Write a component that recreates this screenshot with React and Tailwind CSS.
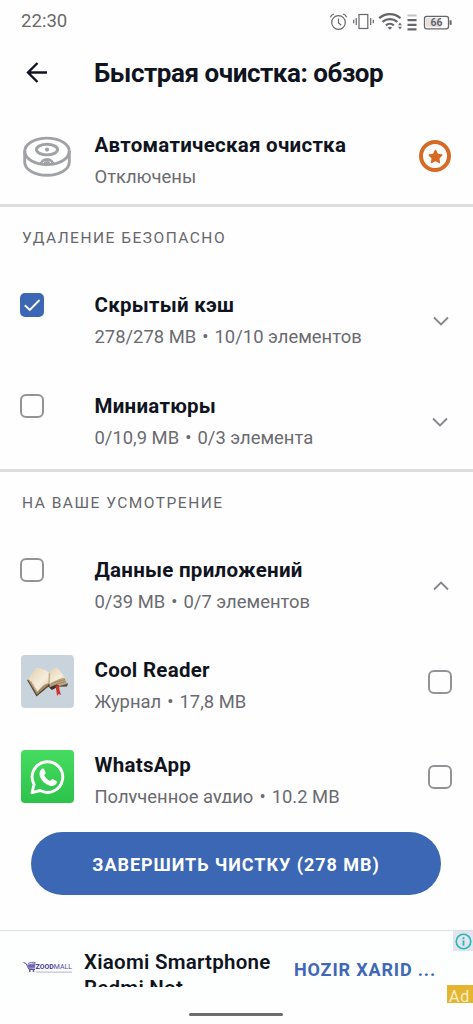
import { useState } from 'react'
import { FaStar } from 'react-icons/fa'

const INITIAL = { cache: true, thumbs: false, data: false, reader: false, whatsapp: false }

function Checkbox({ checked, onChange }) {
  return (
    <button
      onClick={onChange}
      className={
        checked
          ? 'flex h-6 w-6 shrink-0 items-center justify-center rounded-[5px] bg-[#3c67b4]'
          : 'h-6 w-6 shrink-0 rounded-[6px] border-2 border-[#929397]'
      }
    >
      {checked && (
        <svg viewBox="0 0 24 24" className="h-6 w-6" fill="none" stroke="#fff" strokeWidth="1.9">
          <path d="M4.8 12.2 9.8 17 19.5 7" />
        </svg>
      )}
    </button>
  )
}

function Chevron({ up }) {
  return (
    <svg viewBox="0 0 16 10" className="h-[10px] w-4 shrink-0" fill="none" stroke="#85868b" strokeWidth="1.8">
      <path d={up ? 'M1 8.5 8 1.5 15 8.5' : 'M1 1.5 8 8.5 15 1.5'} />
    </svg>
  )
}

function RowText({ title, info, extra }) {
  return (
    <div className="min-w-0 flex-1 whitespace-nowrap">
      <h3 className="text-[20.5px] leading-8 font-bold tracking-[0.27px] text-[#101420]">{title}</h3>
      <p className="text-[18.4px] leading-8 text-[#6a6b70]">
        {info}
        {extra && <> <span className="mx-[1.5px]">•</span> {extra}</>}
      </p>
    </div>
  )
}

function GroupRow({ title, info, extra, checked, onChange, up, chevronClass }) {
  return (
    <div className="flex items-start pl-[19.5px]">
      <div className="w-[75px] pt-1">
        <Checkbox checked={checked} onChange={onChange} />
      </div>
      <RowText title={title} info={info} extra={extra} />
      <div className={chevronClass}>
        <Chevron up={up} />
      </div>
    </div>
  )
}

function AppRow({ icon, title, info, extra, checked, onChange }) {
  return (
    <div className="flex items-start pr-[21px] pl-[21px]">
      <div className="w-[73.5px] pt-[1px]">{icon}</div>
      <RowText title={title} info={info} extra={extra} />
      <div className="pt-4">
        <Checkbox checked={checked} onChange={onChange} />
      </div>
    </div>
  )
}

function RobotIcon() {
  return (
    <svg viewBox="0 0 48 42" className="h-[42px] w-12" fill="none" stroke="#a0a2a6" strokeWidth="2.9">
      <ellipse cx="24" cy="15.3" rx="22.3" ry="13.2" />
      <path d="M1.7 15v11.3c0 7.2 10 13 22.3 13s22.3-5.8 22.3-13V15" />
      <ellipse cx="24" cy="13.6" rx="10.6" ry="5.3" />
      <path d="M18.2 28.2c0-2.8 2.6-4.7 5.8-4.7s5.8 1.9 5.8 4.7" />
      <circle cx="24" cy="13.6" r="2.1" fill="#a0a2a6" stroke="none" />
      <ellipse cx="24" cy="26.5" rx="3" ry="1.6" fill="#a0a2a6" stroke="none" />
    </svg>
  )
}

function BookIcon() {
  return (
    <svg viewBox="0 0 53 53" className="h-[53px] w-[53px] rounded-[4px] bg-[#c9d3dc]">
      <defs>
        <linearGradient id="page" x1="0" y1="0" x2="1" y2="1">
          <stop offset="0" stopColor="#e0cfaa" />
          <stop offset="0.6" stopColor="#f6eddc" />
          <stop offset="1" stopColor="#dcc8a0" />
        </linearGradient>
      </defs>
      <path d="M6 25 15.5 41.5 27 32 46 31.5 47 28.5 28 23z" fill="#574536" />
      <path d="M6.5 24 16 39.5 27.5 29.5 24 22z" fill="#b59c78" />
      <path d="M28 24 43.5 22.5 46 29 29 33.5z" fill="#bba681" />
      <path d="M7 23.5C11 20 12.5 15 16 12.5c3 1.5 8 1 12 5.5l.5 11c-4-2-8 3-12.5 8.5z" fill="url(#page)" />
      <path d="M28 18c2-4 5-4 8-5.5L44.5 23c-5-.5-9 2-16 6z" fill="url(#page)" />
      <path d="m8 25 8 13.500L27.500 30M9.500 26l7 11 10-8M30 31l14.500-4.500M30 28.500 44 24.500" fill="none" stroke="#8b7354" strokeWidth=".6" />
      <path d="M28.300 18 28 29" stroke="#b79b6c" strokeWidth="1" />
      <path d="M28 32.500 36 29.500 38 31 31 35z" fill="#3f302b" />
      <path d="m34.500 31 3.500-1 .5 5 1.500 5-2.500-1-1.500 2-.5-4.500z" fill="#cf3230" />
    </svg>
  )
}

function WhatsAppIcon() {
  return (
    <div className="flex h-[53px] w-[53px] items-center justify-center rounded-[4px] bg-gradient-to-b from-[#45dc61] to-[#2cc34a]">
      <svg viewBox="0 0 36 36" className="h-9 w-9">
        <path
          d="M4.100 25.500A15.300 15.300 0 1 1 10.200 31.500L2 33.700z"
          fill="none"
          stroke="#fff"
          strokeWidth="2.900"
          strokeLinejoin="round"
        />
        <path
          d="M11.500 10.200c.6-.7 1.900-.9 2.500-.2.500.7 1.200 2.500 1.600 3.700.3.900-1 1.900-1.500 2.500 1.300 2.600 3.300 4.500 6.100 5.700.8-.7 1.500-2.200 2.300-1.900l3.900 1.900c.8.400.4 2-.1 2.900-1.200 1.900-4 2.600-6.300 1.900-5-1.600-8.300-5-10-9-.9-2.700-.5-5.600 1.500-7.500z"
          fill="#fff"
        />
      </svg>
    </div>
  )
}

function StatusIcons() {
  return (
    <svg viewBox="0 0 126 20" className="mb-[3px] h-5 w-[126px]" fill="none" stroke="#66676a" strokeWidth="1.2">
      {/* alarm */}
      <circle cx="9.5" cy="11.5" r="6.8" />
      <path d="M9.5 7.5v4.3l2.7 2.5M1.3 6.2C2 4.7 3.3 3.5 5 3M17.7 6.2C17 4.700 15.700 3.500 14 3" />
      {/* vibrate */}
      <rect x="30" y="3.5" width="8.8" height="14" />
      <path d="M27.2 7v7M24.7 8.8v3.5M41.7 7v7M44.3 8.8v3.5" />
      {/* wifi */}
      <path d="M51 7.2c6-5.500 15.300-5.500 21.300 0M54.300 10.900c4.200-3.700 10.600-3.700 14.800 0M57.700 14.300c2.300-2 5.600-2 7.900 0" transform="translate(-.8 0)" strokeWidth="2.3" />
      <path d="m60.900 18.800-2.200-2.400c1.300-1 3.100-1 4.400 0z" fill="#66676a" stroke="none" />
      <path d="m71 11.500 1.900 2.700h-3.800zM71 18.500l1.900-2.700h-3.800z" fill="#66676a" stroke="none" />
      {/* signal */}
      <path d="M78.500 4.500h9" stroke="#c0c1c2" strokeWidth="2" />
      <path d="M78.500 9.200h9M78.500 13.800h9M78.500 18.300h9" strokeWidth="2.2" />
      {/* battery */}
      <rect x="95.500" y="5.300" width="24" height="12.500" rx="2.2" strokeWidth="1.3" />
      <rect x="97" y="6.800" width="15" height="9.500" fill="#e2e2e3" stroke="none" />
      <path d="M121.600 9.300v4.500" strokeWidth="2" />
      <text x="107.500" y="15.400" textAnchor="middle" className="font-semibold" fontSize="10.5" fill="#5d5e61" stroke="none">
        66
      </text>
    </svg>
  )
}

function ZoodLogo() {
  return (
    <svg viewBox="0 0 50 16" className="h-4 w-[50px]">
      <path d="M.5 3.500 3 4.500 6 10.500h6" fill="none" stroke="#5d51a8" strokeWidth="1" />
      <path d="M4 5.500 12.500 4 12 9.500 6 10z" fill="#8379bd" />
      <path d="M5 4.500c2-1 5-1.500 7.500-1M5.500 7h6.500" fill="none" stroke="#5d51a8" strokeWidth=".9" />
      <circle cx="6.800" cy="12" r="1" fill="#5d51a8" />
      <circle cx="10.500" cy="12" r="1" fill="#5d51a8" />
      <text x="12.500" y="10.300" fontSize="7.6" fill="#54479f" textLength="36.500" lengthAdjust="spacingAndGlyphs">
        <tspan className="font-extrabold">ZOOD</tspan>
        <tspan>MALL</tspan>
      </text>
      <path d="M13 13.200h36" stroke="#c3bfde" strokeWidth="1.200" />
    </svg>
  )
}

function App() {
  const [selected, setSelected] = useState(INITIAL)

  const toggle = (key) => setSelected(prev => ({ ...prev, [key]: !prev[key] }))

  return (
    <div className="flex h-[1024px] w-[473px] flex-col overflow-hidden bg-[#fefefe] font-[Roboto,sans-serif]">
      {/* Status bar */}
      <div className="flex h-[42px] shrink-0 items-center justify-between pt-[2px] pr-[18px] pl-[21px]">
        <span className="text-[18.6px] text-[#6b6b6b]">22:30</span>
        <StatusIcons />
      </div>

      {/* Header */}
      <header className="flex h-[62px] shrink-0 items-center pl-[26px]">
        <svg viewBox="0 0 22 22" className="h-[22px] w-[22px]" fill="none" stroke="#101420" strokeWidth="2.4">
          <path d="M21 10.500H2.500M11.500 1 2 10.500l9.500 9.500" />
        </svg>
        <h1 className="pl-[46px] text-[26px] font-bold tracking-[-0.46px] whitespace-nowrap text-[#101420]">
          Быстрая очистка: обзор
        </h1>
      </header>

      {/* Auto clean */}
      <div className="flex h-[103px] shrink-0 items-start border-b-[3px] border-[#dddddd] pt-[25px] pr-[22px] pl-[23px]">
        <div className="w-[71.5px] pt-[7px]">
          <RobotIcon />
        </div>
        <RowText title="Автоматическая очистка" info="Отключены" />
        <div className="mt-[11px] flex h-8 w-8 items-center justify-center rounded-full border-4 border-[#d66b25]">
          <FaStar className="h-[15px] w-[15px] text-[#d66b25]" />
        </div>
      </div>

      {/* Safe to delete */}
      <section className="flex h-[265px] shrink-0 flex-col border-b-[3px] border-[#dddddd]">
        <h2 className="h-[82px] pt-[21px] pl-[22px] text-[15.5px] leading-5 tracking-[1.5px] text-[#66676c]">УДАЛЕНИЕ БЕЗОПАСНО</h2>
        <div className="flex flex-col gap-[36.5px]">
          <GroupRow
            title="Скрытый кэш"
            info="278/278 MB"
            extra="10/10 элементов"
            checked={selected.cache}
            onChange={() => toggle('cache')}
            chevronClass="pt-[27px] pr-6"
          />
          <GroupRow
            title="Миниатюры"
            info="0/10,9 MB"
            extra="0/3 элемента"
            checked={selected.thumbs}
            onChange={() => toggle('thumbs')}
            chevronClass="pt-[27px] pr-[25px]"
          />
        </div>
      </section>

      {/* Up to the user, cut off by the footer */}
      <section className="flex h-[331px] shrink-0 flex-col overflow-hidden">
        <h2 className="h-[82px] shrink-0 pt-[21px] pl-[22px] text-[15.5px] leading-5 tracking-[1.5px] text-[#66676c]">НА ВАШЕ УСМОТРЕНИЕ</h2>
        <GroupRow
          title="Данные приложений"
          info="0/39 MB"
          extra="0/7 элементов"
          checked={selected.data}
          onChange={() => toggle('data')}
          up
          chevronClass="pt-[27px] pr-6"
        />
        <div className="flex flex-col gap-[31px] pt-9">
          <AppRow
            icon={<BookIcon />}
            title="Cool Reader"
            info="Журнал"
            extra="17,8 MB"
            checked={selected.reader}
            onChange={() => toggle('reader')}
          />
          <AppRow
            icon={<WhatsAppIcon />}
            title="WhatsApp"
            info="Полученное аудио"
            extra="10.2 MB"
            checked={selected.whatsapp}
            onChange={() => toggle('whatsapp')}
          />
        </div>
      </section>

      <div className="h-[127px] shrink-0 px-[31px] pt-[29px]">
        <button className="h-[63px] w-[410px] rounded-full bg-[#3c67b4] pt-[2px] text-[18px] font-bold tracking-[0.95px] whitespace-nowrap text-white">
          ЗАВЕРШИТЬ ЧИСТКУ (278 MB)
        </button>
      </div>

      {/* Ad banner */}
      <div className="flex h-[73px] shrink-0 items-start border-t border-[#dcdfe1] bg-[#fdfefe] pl-[23px]">
        <div className="w-[61px] pt-[28px]">
          <ZoodLogo />
        </div>
        <div className="mt-[18px] h-[38px] w-[210px] overflow-hidden text-[20.5px] leading-[26px] font-semibold tracking-[0.25px] text-[#101420]">
          Xiaomi Smartphone Redmi Not
        </div>
        <div className="flex-1 pt-[26px] text-[18px] leading-[26px] font-bold tracking-[0.85px] whitespace-nowrap text-[#3f68b8]">
          HOZIR XARID ...
        </div>
        <div className="flex h-[72px] w-[26px] shrink-0 flex-col items-end justify-between">
          <div className="flex h-5 w-5 items-center justify-center bg-[#e2e6ec]">
            <svg viewBox="0 0 18 18" className="h-[17px] w-[17px]" fill="none" stroke="#29b6bd" strokeWidth="1.700">
              <circle cx="9" cy="9" r="7.700" />
              <path d="M9 8v5.500M9 4.500v2" strokeWidth="1.900" />
            </svg>
          </div>
          <div className="h-[18px] w-[26px] bg-[#e6b52f] pl-[2px] text-[16px] leading-[23px] tracking-[0.7px] text-[#f8edc8]">Ad</div>
        </div>
      </div>

      <div className="mt-[10px] mr-[190px] ml-[189px] h-[3px] w-[94px] shrink-0 rounded-full bg-[#6d6e70]" />
    </div>
  )
}

export default App
